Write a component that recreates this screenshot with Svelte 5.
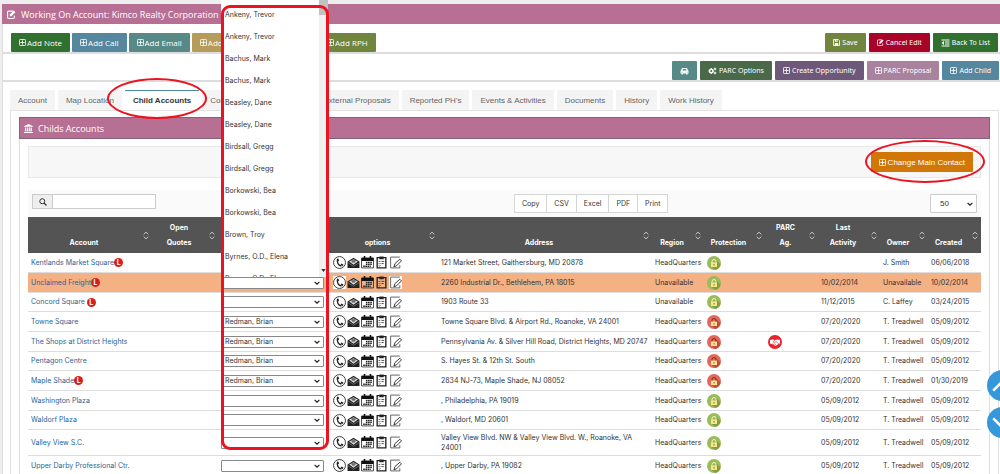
<script lang="ts">
  type Action = { label: string; tone: string; icon: string };
  type Account = {
    name: string;
    lead?: boolean;
    contact?: string;
    address: string;
    region: string;
    locked?: boolean;
    agreement?: boolean;
    activity?: string;
    owner: string;
    created: string;
    open?: boolean;
  };

  const addActions: Action[] = [
    { label: "Add Note", tone: "green", icon: "plus" },
    { label: "Add Call", tone: "blue", icon: "plus" },
    { label: "Add Email", tone: "teal", icon: "plus" },
    { label: "Add Event", tone: "sand", icon: "plus" },
    { label: "Add Tasks", tone: "orange", icon: "plus" },
    { label: "Add RPH", tone: "olive", icon: "plus" },
  ];

  const editActions: Action[] = [
    { label: "Save", tone: "olive", icon: "save" },
    { label: "Cancel Edit", tone: "red", icon: "edit" },
    { label: "Back To List", tone: "green", icon: "list" },
  ];

  const parcActions: Action[] = [
    { label: "", tone: "teal", icon: "car" },
    { label: "PARC Options", tone: "forest", icon: "cogs" },
    { label: "Create Opportunity", tone: "purple", icon: "plus" },
    { label: "PARC Proposal", tone: "mauve", icon: "plus" },
    { label: "Add Child", tone: "blue", icon: "plus" },
  ];

  const tabs = [
    "Account",
    "Map Location",
    "Child Accounts",
    "Contact",
    "Opportunities",
    "External Proposals",
    "Reported PH's",
    "Events & Activities",
    "Documents",
    "History",
    "Work History",
  ];
  let activeTab = $state("Child Accounts");

  const exportFormats = ["Copy", "CSV", "Excel", "PDF", "Print"];

  const columns = [
    { title: "Account", width: 124 },
    { title: "Open\nQuotes", width: 66 },
    { title: "Main\nContact", width: 111 },
    { title: "options", width: 109 },
    { title: "Address", width: 214 },
    { title: "Region", width: 52 },
    { title: "Protection", width: 61 },
    { title: "PARC\nAg.", width: 53 },
    { title: "Last\nActivity", width: 62 },
    { title: "Owner", width: 48 },
    { title: "Created", width: 53 },
  ];
  const totalWidth = columns.reduce((sum, c) => sum + c.width, 0);

  const contacts = [
    "Ankeny, Trevor",
    "Ankeny, Trevor",
    "Bachus, Mark",
    "Bachus, Mark",
    "Beasley, Dane",
    "Beasley, Dane",
    "Birdsall, Gregg",
    "Birdsall, Gregg",
    "Borkowski, Bea",
    "Borkowski, Bea",
    "Brown, Troy",
    "Byrnes, O.D., Elena",
    "Byrnes, O.D., Elena",
  ];

  const HQ = "HeadQuarters";
  const accounts: Account[] = [
    { name: "Kentlands Market Square", lead: true, address: "121 Market Street, Gaithersburg, MD 20878", region: HQ, owner: "J. Smith", created: "06/06/2018" },
    { name: "Unclaimed Freight", lead: true, address: "2260 Industrial Dr., Bethlehem, PA 18015", region: "Unavailable", activity: "10/02/2014", owner: "Unavailable", created: "10/02/2014", open: true },
    { name: "Concord Square ", lead: true, address: "1903 Route 33", region: "Unavailable", activity: "11/12/2015", owner: "C. Laffey", created: "03/24/2015" },
    { name: "Towne Square", contact: "Redman, Brian", address: "Towne Square Blvd. & Airport Rd., Roanoke, VA 24001", region: HQ, locked: true, activity: "07/20/2020", owner: "T. Treadwell", created: "05/09/2012" },
    { name: "The Shops at District Heights", contact: "Redman, Brian", address: "Pennsylvania Av. & Silver Hill Road, District Heights, MD 20747", region: HQ, locked: true, agreement: true, activity: "07/20/2020", owner: "T. Treadwell", created: "05/09/2012" },
    { name: "Pentagon Centre", contact: "Redman, Brian", address: "S. Hayes St. & 12th St. South", region: HQ, locked: true, activity: "07/20/2020", owner: "T. Treadwell", created: "05/09/2012" },
    { name: "Maple Shade", lead: true, contact: "Redman, Brian", address: "2834 NJ-73, Maple Shade, NJ 08052", region: HQ, locked: true, activity: "07/20/2020", owner: "T. Treadwell", created: "01/30/2019" },
    { name: "Washington Plaza", address: ", Philadelphia, PA 19019", region: HQ, activity: "05/09/2012", owner: "T. Treadwell", created: "05/09/2012" },
    { name: "Waldorf Plaza", address: ", Waldorf, MD 20601", region: HQ, activity: "05/09/2012", owner: "T. Treadwell", created: "05/09/2012" },
    { name: "Valley View S.C.", address: "Valley View Blvd. NW & Valley View Blvd. W., Roanoke, VA 24001", region: HQ, activity: "05/09/2012", owner: "T. Treadwell", created: "05/09/2012" },
    { name: "Upper Darby Professional Ctr.", address: ", Upper Darby, PA 19082", region: HQ, activity: "05/09/2012", owner: "T. Treadwell", created: "05/09/2012" },
  ];
</script>

{#snippet icon(name: string)}
  <svg class="icon" class:wide={name === "car" || name === "cogs" || name === "list"} viewBox="0 0 16 16" aria-hidden="true">
    {#if name === "plus"}
      <rect x="1" y="1" width="14" height="14" rx="2" fill="none" stroke="currentColor" stroke-width="2" />
      <path d="M8 3v10M3 8h10" stroke="currentColor" stroke-width="2" />
    {:else if name === "save"}
      <path d="M1 1h11l3 3v11H1z" fill="none" stroke="currentColor" stroke-width="2" />
      <path d="M4 1h7v5H4zM4 9h8v6H4z" fill="currentColor" />
      <path d="M8 2h2v3H8z" fill="#6f843f" />
    {:else if name === "edit"}
      <path d="M11 2H3a2 2 0 0 0-2 2v9a2 2 0 0 0 2 2h8a2 2 0 0 0 2-2v-3" fill="none" stroke="currentColor" stroke-width="2" />
      <path d="M5 11V8l7-7 3 3-7 7z" fill="currentColor" />
    {:else if name === "list"}
      <path d="M0 2h16M7 6h9M7 10h9M0 14h16" stroke="currentColor" stroke-width="2" />
      <path d="M5 4v8L0 8z" fill="currentColor" />
    {:else if name === "car"}
      <path d="M3 2h10l2 5h1v6h-2v2h-3v-2H5v2H2v-2H0V7h1z" fill="currentColor" />
      <path d="M5 4h6l1 3H4z" fill="#578a87" />
      <circle cx="3" cy="10" r="1" fill="#578a87" />
      <circle cx="13" cy="10" r="1" fill="#578a87" />
    {:else if name === "cogs"}
      <circle cx="5.500" cy="8" r="3.500" fill="none" stroke="currentColor" stroke-width="3" />
      <path d="M5.500 2v2M5.500 12v2M0 8h1M10 8h1" stroke="currentColor" stroke-width="2" />
      <circle cx="13" cy="4" r="1.800" fill="none" stroke="currentColor" stroke-width="2" />
      <circle cx="13" cy="12" r="1.800" fill="none" stroke="currentColor" stroke-width="2" />
    {:else if name === "bank"}
      <path d="M8 0l8 4v1H0V4zM2 6h2v6H2zM5.500 6h2v6h-2zM9 6h2v6H9zM12 6h2v6h-2zM1 12h14v1H1zM0 14h16v2H0z" fill="currentColor" />
    {:else if name === "search"}
      <circle cx="6.500" cy="6.500" r="5" fill="none" stroke="currentColor" stroke-width="2" />
      <path d="M10 10l5 5" stroke="currentColor" stroke-width="2.500" />
    {/if}
  </svg>
{/snippet}

{#snippet buttons(items: Action[])}
  {#each items as item (item.label)}
    <button class="btn {item.tone}" aria-label={item.label || "Vehicle"}>
      {@render icon(item.icon)}{item.label}
    </button>
  {/each}
{/snippet}

{#snippet chevron()}
  <svg class="chevron" viewBox="0 0 10 6" aria-hidden="true">
    <path d="M1 1l4 4 4-4" fill="none" stroke="#222" stroke-width="2" />
  </svg>
{/snippet}

<div class="page">
  <header class="title-bar">
    {@render icon("edit")}
    <h1>Working On Account: Kimco Realty Corporation</h1>
  </header>

  <div class="action-row">
    <div class="group large">{@render buttons(addActions)}</div>
    <div class="group">{@render buttons(editActions)}</div>
  </div>
  <div class="action-row second">
    <div class="group">{@render buttons(parcActions)}</div>
  </div>

  <main class="content">
    <nav class="tabs">
      {#each tabs as tab (tab)}
        <button class="tab" class:active={tab === activeTab} onclick={() => (activeTab = tab)}>{tab}</button>
      {/each}
    </nav>

    <div class="pane">
      <section class="panel">
        <header class="panel-head">
          {@render icon("bank")}
          <h2>Childs Accounts</h2>
        </header>

        <div class="panel-body">
          <div class="well">
            <button class="btn change">{@render icon("plus")}Change Main Contact</button>
          </div>

          <div class="toolbar">
            <label class="search">
              <span class="addon">{@render icon("search")}</span>
              <input type="text" aria-label="Search" />
            </label>
            <div class="exports">
              {#each exportFormats as format (format)}
                <button>{format}</button>
              {/each}
            </div>
            <div class="select page-size">
              <select aria-label="Rows per page"><option>50</option></select>
              {@render chevron()}
            </div>
          </div>

          <table>
            <colgroup>
              {#each columns as column (column.title)}
                <col style:width="{(column.width / totalWidth) * 100}%" />
              {/each}
            </colgroup>
            <thead>
              <tr>
                {#each columns as column (column.title)}
                  <th>
                    <div class="th">
                      <span>{column.title}</span>
                      <svg viewBox="0 0 8 12" aria-hidden="true">
                        <path d="M1 4.500l3-3 3 3M1 7.500l3 3 3-3" fill="none" stroke="#ddd" stroke-width="1.200" />
                      </svg>
                    </div>
                  </th>
                {/each}
              </tr>
            </thead>
            <tbody>
              {#each accounts as account (account.name)}
                <tr class:selected={account.open}>
                  <td>
                    <a href="#account">{account.name}</a>{#if account.lead}<b class="lead">L</b>{/if}
                  </td>
                  <td></td>
                  <td>
                    <div class="select">
                      <select aria-label="Main contact for {account.name}">
                        <option>{account.contact ?? ""}</option>
                      </select>
                      {@render chevron()}
                      {#if account.open}
                        <div class="menu">
                          <ul>
                            {#each contacts as contact}
                              <li>{contact}</li>
                            {/each}
                          </ul>
                          <div class="track">
                            <div class="thumb"></div>
                            <svg viewBox="0 0 6 4" aria-hidden="true"><path d="M0 0h6L3 4z" fill="#333" /></svg>
                          </div>
                        </div>
                      {/if}
                    </div>
                  </td>
                  <td>
                    <div class="options">
                      <button aria-label="Call">
                        <svg viewBox="0 0 24 24">
                          <rect class="paper" width="24" height="24" />
                          <circle cx="12" cy="12" r="11" fill="none" stroke="#222" stroke-width="1.600" />
                          <path d="M8.500 6c-2.500 5 2 12 7 12.500" fill="none" stroke="#222" stroke-width="2.500" />
                          <path d="M7 6l2-2 2.500 4-2 2zM14 16l1.500-2 4 2-2 3z" fill="#222" />
                        </svg>
                      </button>
                      <button aria-label="Email">
                        <svg viewBox="0 0 24 24">
                          <path d="M1 10L12 3l11 7v12H1z" fill="#222" />
                          <path d="M4 10l8-4 8 4-8 6z" fill="#ddd" />
                          <path d="M8 9h8M9 11h6" stroke="#222" stroke-width="1.500" />
                          <path d="M1 12l11 7 11-7" fill="none" stroke="#999" />
                        </svg>
                      </button>
                      <button aria-label="Calendar">
                        <svg viewBox="0 0 24 24">
                          <path d="M1 4h22v18H1z" fill="none" stroke="#222" stroke-width="1.500" />
                          <path d="M1 3h22v6H1zM5 0h3v4H5zM16 0h3v4h-3z" fill="#111" />
                          <path d="M9 12h12M9 15.500h12M4 19h14" stroke="#222" stroke-width="2.500" stroke-dasharray="3 1" />
                        </svg>
                      </button>
                      <button aria-label="Tasks">
                        <svg viewBox="0 0 24 24">
                          <path d="M4 3h16v19H4z" fill="none" stroke="#222" stroke-width="2.500" />
                          <path d="M8 1h8v5H8z" fill="#222" />
                          <path d="M7 10l1 1 2-2M12 10h5M7 14l1 1 2-2M12 14h4M7 18l1 1 2-2" fill="none" stroke="#222" stroke-width="1.500" />
                        </svg>
                      </button>
                      <button aria-label="Edit">
                        <svg viewBox="0 0 24 24">
                          <rect class="paper" width="24" height="24" />
                          <path d="M20 2H3v20h17v-5" fill="none" stroke="#444" stroke-width="1.500" />
                          <path d="M9 20l2-6L20 6l3 3-9 9z" fill="#fff" stroke="#333" stroke-width="1.800" />
                        </svg>
                      </button>
                    </div>
                  </td>
                  <td>{account.address}</td>
                  <td>{account.region}</td>
                  <td>
                    <svg class="status" viewBox="0 0 28 28" role="img" aria-label={account.locked ? "Protected" : "Open"}>
                      <circle cx="14" cy="14" r="14" fill={account.locked ? "#e4675b" : "#9bbb57"} />
                      <path d="M19 9l8 8a14 14 0 0 1-10 11l-9-7z" fill={account.locked ? "#c04d45" : "#7f9f42"} />
                      <path d="M10 14v-3a4 4 0 0 1 8 0v3" fill="none" stroke={account.locked ? "#7c2b22" : "#f2f0d0"} stroke-width="2" />
                      <rect x="8" y="13" width="12" height="9" rx="1" fill="#f8e58c" />
                      <path d="M14 16v3" stroke="#8a6a2c" stroke-width="2" />
                    </svg>
                  </td>
                  <td>
                    {#if account.agreement}
                      <svg class="status" viewBox="0 0 28 28" role="img" aria-label="Agreement">
                        <circle cx="14" cy="14" r="14" fill="#e8232b" />
                        <path d="M4 10l5-1 5 1 5-1 5 1v7l-3 1-6 4-7-4-4-1z" fill="#fff" />
                        <path d="M14 10l-4 4 3 1 3-2 6 5M12 17l4 3M9 17l4 4" fill="none" stroke="#e8232b" stroke-width="1.200" />
                      </svg>
                    {/if}
                  </td>
                  <td>{account.activity ?? ""}</td>
                  <td>{account.owner}</td>
                  <td>{account.created}</td>
                </tr>
              {/each}
            </tbody>
          </table>
        </div>
      </section>
    </div>
  </main>

  <div class="mark tab-mark"></div>
  <div class="mark change-mark"></div>
  <div class="mark column-mark"></div>

  <div class="jump">
    <button aria-label="Scroll up">
      <svg viewBox="0 0 30 30"><path d="M6 20l9-9 9 9" fill="none" stroke="#fff" stroke-width="2.500" /></svg>
    </button>
    <button aria-label="Scroll down">
      <svg viewBox="0 0 30 30"><path d="M6 11l9 9 9-9" fill="none" stroke="#fff" stroke-width="2.500" /></svg>
    </button>
  </div>
</div>

<style>
  :global(html) {
    scrollbar-width: none;
  }
  :global(body) {
    background: #eee;
    overflow-x: hidden;
  }

  .page {
    position: relative;
    padding: 4px 0 0 2px;
    overflow: hidden;
    font-family: "Liberation Sans", Arial, sans-serif;
    font-size: 8px;
    color: #333;
  }
  button,
  input,
  select {
    font: inherit;
    color: inherit;
  }
  button {
    border: none;
    cursor: pointer;
  }
  h1,
  h2 {
    margin: 0;
    font-size: 9px;
    font-weight: 400;
  }

  .icon {
    width: 7px;
    height: 7px;
    flex: none;
  }
  .icon.wide {
    width: 9px;
    height: 8px;
  }

  .title-bar,
  .panel-head {
    display: flex;
    align-items: center;
    gap: 5px;
    background: #b76f94;
    color: #fff;
    font-family: "Open Sans", sans-serif;
  }
  .title-bar {
    height: 20px;
    padding-left: 5px;
  }
  .title-bar .icon,
  .panel-head .icon {
    width: 9px;
    height: 9px;
  }

  .action-row {
    display: flex;
    justify-content: space-between;
    padding: 9px 2px 0 8px;
    background: #fff;
    border-left: 1px solid #ddd;
    border-bottom: 2px solid #ddd;
  }
  .action-row.second {
    justify-content: flex-end;
    padding-top: 7px;
    padding-right: 1px;
  }
  .group {
    display: flex;
    gap: 3px;
    font-family: "Noto Sans", "Open Sans", sans-serif;
    font-size: 7px;
  }
  .group.large {
    gap: 2px;
    font-family: "Open Sans", sans-serif;
    font-size: 8px;
  }

  .btn {
    display: flex;
    align-items: center;
    gap: 2px;
    height: 19px;
    padding: 0 8px;
    border-radius: 1px;
    color: #fff;
    white-space: nowrap;
  }
  .large .btn {
    gap: 1px;
  }
  .green { background: #31702f; }
  .blue { background: #55879f; }
  .teal { background: #578a87; }
  .sand { background: #b59c5a; }
  .orange { background: #cf7a0c; }
  .olive { background: #71853f; }
  .red { background: #a90329; }
  .forest { background: #496949; }
  .purple { background: #6e587a; }
  .mauve { background: #a8829f; }
  .change {
    height: 20px;
    background: #d07708;
  }

  .content {
    padding: 8px 1px 0 7px;
    border-left: 1px solid #ddd;
    background: #fff;
  }

  .tabs {
    display: flex;
    gap: 3px;
  }
  .tab {
    height: 20px;
    padding: 0 8px;
    background: #f4f4f4;
    color: #666;
    white-space: nowrap;
  }
  .tab.active {
    border-top: 1px solid #4b88a2;
    background: #fff;
    color: #333;
    font-weight: 700;
  }

  .pane {
    padding: 6px 8px 0;
    border: 1px solid #e2e2e2;
    border-bottom: none;
  }
  .panel {
    border: 1px solid #ddd;
    border-top: none;
  }
  .panel-head {
    height: 22px;
    box-sizing: border-box;
    margin: 0 -1px;
    padding-left: 4px;
    border: 1px solid #85607a;
  }
  .panel-body {
    padding: 7px 8px 0;
  }

  .well {
    display: flex;
    justify-content: flex-end;
    margin-bottom: 12px;
    padding: 5px 7px;
    border: 1px solid #e8e8e8;
    background: #f7f7f7;
  }

  .toolbar {
    display: grid;
    grid-template-columns: 51% 1fr auto;
    align-items: start;
    height: 27px;
    box-sizing: border-box;
    padding: 4px 4px 0;
    background: #fafafa;
  }
  .search {
    display: flex;
    width: 124px;
    height: 15px;
  }
  .addon {
    display: grid;
    place-items: center;
    width: 20px;
    box-sizing: border-box;
    border: 1px solid #ccc;
    border-right: none;
    background: #eee;
  }
  .addon .icon {
    width: 8px;
    height: 8px;
  }
  .search input {
    flex: 1;
    min-width: 0;
    padding: 0 4px;
    border: 1px solid #ccc;
    background: #fff;
  }
  .exports {
    display: flex;
    font-family: Inter, "Liberation Sans", sans-serif;
    font-size: 7px;
  }
  .exports button {
    height: 19px;
    margin-right: -1px;
    padding: 0 7px;
    border: 1px solid #d5d5d5;
    background: #fff;
  }

  .select {
    position: relative;
    width: 103px;
  }
  .select select {
    display: block;
    width: 100%;
    height: 12px;
    padding: 0 3px;
    appearance: none;
    border: 1px solid #888;
    border-radius: 1px;
    background: #fff;
    line-height: 10px;
  }
  .chevron {
    position: absolute;
    top: 50%;
    right: 4px;
    width: 6px;
    height: 4px;
    margin-top: -2px;
    pointer-events: none;
  }
  .page-size {
    width: 47px;
  }
  .page-size select {
    height: 19px;
    padding: 0 9px;
    border-color: #ccc;
  }

  table {
    width: 100%;
    table-layout: fixed;
    border-collapse: collapse;
    font-family: Inter, "Liberation Sans", sans-serif;
    font-size: 7px;
  }
  th {
    height: 36px;
    padding: 0;
    background: #545454;
    color: #fff;
    font-weight: 700;
    line-height: 15px;
    white-space: pre-line;
  }
  .th {
    display: grid;
    grid-template-columns: 1fr 12px;
    align-items: center;
    height: 36px;
  }
  .th span {
    align-self: end;
    padding-bottom: 3px;
  }
  .th svg {
    width: 6px;
    height: 9px;
    margin-left: 3px;
  }
  td {
    height: 19px;
    padding: 0 0 0 3px;
    border-bottom: 1px solid #ddd;
    line-height: 10px;
  }
  tbody tr:nth-child(3n) td {
    height: 18px;
  }
  tbody tr:nth-child(10) td {
    height: 25px;
  }
  td a {
    color: #2a6496;
    text-decoration: none;
    white-space: pre;
  }
  .selected td {
    background: #f4b183;
  }
  .lead {
    display: inline-block;
    width: 9px;
    height: 9px;
    border-radius: 50%;
    background: #d81e1e;
    color: #fff;
    line-height: 9px;
    text-align: center;
    vertical-align: middle;
  }

  .options {
    display: flex;
    gap: 1px;
    padding-left: 1px;
  }
  .options button {
    display: flex;
    padding: 0;
    background: none;
  }
  .options svg {
    width: 13px;
    height: 13px;
  }
  .paper {
    fill: #fff;
  }
  .status {
    display: block;
    width: 14px;
    height: 14px;
  }

  .menu {
    position: absolute;
    bottom: 100%;
    left: 0;
    z-index: 2;
    display: flex;
    width: 107px;
    height: 277px;
    overflow: hidden;
    background: #fff;
    line-height: 22px;
  }
  .menu ul {
    flex: 1;
    margin: 0;
    padding: 4px 0 0 4px;
    list-style: none;
  }
  .track {
    display: flex;
    flex-direction: column;
    justify-content: space-between;
    align-items: center;
    width: 9px;
    background: #f0f0f0;
  }
  .thumb {
    width: 100%;
    height: 15px;
    background: #c1c1c1;
  }
  .track svg {
    width: 5px;
    height: 3px;
    margin-bottom: 5px;
  }

  .mark {
    position: absolute;
    z-index: 3;
    box-sizing: border-box;
    border: 2px solid #ec1320;
    border-radius: 50%;
    pointer-events: none;
  }
  .tab-mark {
    top: 78px;
    left: 107px;
    width: 100px;
    height: 41px;
  }
  .change-mark {
    top: 140px;
    right: 15px;
    width: 120px;
    height: 43px;
  }
  .column-mark {
    top: 5px;
    left: 221px;
    width: 108px;
    height: 445px;
    border-width: 3px;
    border-radius: 9px;
  }

  .jump {
    position: fixed;
    top: 370px;
    right: -18px;
    display: grid;
    gap: 6px;
  }
  .jump button {
    width: 31px;
    height: 31px;
    padding: 0;
    border-radius: 50%;
    background: #3498db;
  }
</style>
